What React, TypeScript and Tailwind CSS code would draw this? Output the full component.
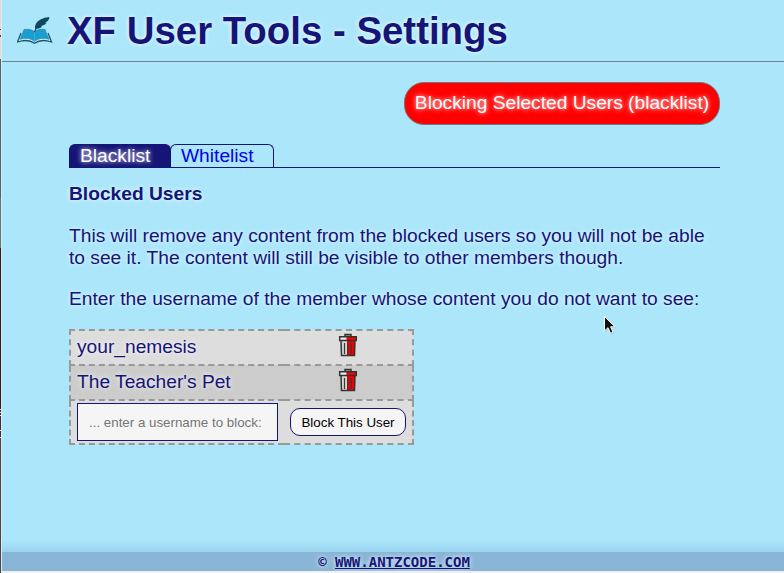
import React from "react";

const glow = "[text-shadow:0_0_5px_#fff]";

function BookLogo() {
  return (
    <svg className="block h-[28px] w-[36px]" viewBox="0 0 36 28">
      <path d="M4 16 L0.500 25 Q11 21.500 17.500 26.300 Q24 21.500 34.500 25 L31 16" fill="#d9f1f8" stroke="#17566e" strokeWidth="1.300" />
      <path d="M7 12.500 L3 22.300 Q12 19.500 17.500 24.500 Q23 19.500 32 22.300 L28 12.500 Q21 11.500 17.500 15 Q14 11.500 7 12.500Z" fill="#199ed3" stroke="#2588ad" strokeWidth=".7" />
      <path d="M17.500 15.500V24.500" stroke="#4ab7dc" strokeWidth=".7" />
      <path d="M17.300 15 Q20 8.500 27 3" fill="none" stroke="#17475c" strokeWidth="1.100" />
      <path d="M18 11.500 Q17.500 5.500 23.500 2.500 Q27.500 .400 32.300 0 Q32.800 2 30.500 4.200 L28 5.500 L29.800 5.800 Q27.500 8.700 24 9 L25 9.800 Q22 12.500 18 11.500Z" fill="#0e4960" />
    </svg>
  );
}

function TrashIcon() {
  return (
    <svg className="mx-auto block h-[24px] w-[20px]" viewBox="0 0 20 24">
      <path d="M3 7H10V22.500H3.500Z" fill="#d5d5d5" />
      <path d="M9 7H17V22.500H9Z" fill="#f00000" />
      <path d="M7 4V1.500H13V4" fill="#999" stroke="#333" strokeWidth="1.500" />
      <path d="M1.700 3.800H8.500V7.500H1.700Z" fill="#eee" />
      <path d="M8.500 3.800H18.300V7.500H8.500Z" fill="#f00" />
      <path d="M1.700 3.800H18.300V7.500H1.700ZM3 7.500L3.500 22.500H16.500L17 7.500" fill="none" stroke="#333" strokeWidth="1.500" />
      <path d="M6.500 10V21M9.800 10V21M13.200 10V21" stroke="#403535" strokeWidth="1.200" />
    </svg>
  );
}

function WindowEdge() {
  return (
    <div className="flex w-[2px] shrink-0 border-r border-[#dfe9ed] bg-[linear-gradient(to_bottom,#ddd_0_29px,#444_29px_30px,#ddd_30px_35px,#444_35px_37px,#ddd_37px_59px,#416b7c_59px_198px,#537b84_198px_248px,#211f27_248px_409px,#ddd_409px_410px,#334_410px_412px,#ddd_412px_413px,#334_413px_415px,#ddd_415px_416px,#334_416px_430px,#ddd_430px_431px,#334_431px_437px,#ddd_437px_438px,#414753_438px)]" />
  );
}

export default function App() {
  return (
    <div className="relative flex h-[573px] w-[784px] overflow-hidden bg-[#abe6fb] font-['Liberation_Sans',Arial,sans-serif] text-[19.2px] leading-[22px] text-[#151578]">
      <WindowEdge />
      <div className="flex min-w-0 flex-1 flex-col">
        <header className="flex h-[62px] shrink-0 items-center border-b border-[#778087] pl-[15px]">
          <BookLogo />
          <h1 className={`ml-[14px] text-[38.4px] leading-[44px] font-bold ${glow}`}>XF User Tools - Settings</h1>
        </header>
        <main className={`mr-[64px] ml-[67px] flex flex-1 flex-col items-start pt-[20px] ${glow}`}>
          <div className="flex h-[43px] w-[316px] items-center justify-center self-end rounded-[20px] border border-[#777] bg-[#f00] pb-[2px] text-white">
            Blocking Selected Users (blacklist)
          </div>
          <nav className="mt-[19px] flex h-[24px] w-full border-b border-[#151578] [text-shadow:none]">
            <span className="w-[102px] rounded-t-[6px] border border-b-0 border-[#151578] bg-[#151578] pl-[10px] text-white [text-shadow:0_0_5px_#fff]">Blacklist</span>
            <span className="-ml-px w-[104px] rounded-t-[6px] border border-b-0 border-[#151578] pl-[10px] text-[#0000ee]">Whitelist</span>
          </nav>
          <h2 className="mt-[15px] font-bold">Blocked Users</h2>
          <p className="mt-[20px] w-[651px]">This will remove any content from the blocked users so you will not be able to see it. The content will still be visible to other members though.</p>
          <p className="mt-[19px]">Enter the username of the member whose content you do not want to see:</p>
          <table className="mt-[19px] w-[345px] table-fixed border-collapse">
            <colgroup>
              <col className="w-[214px]" />
              <col />
            </colgroup>
            <tbody>
              <tr className="h-[35px] border-2 border-dashed border-[#999] bg-[#ddd]">
                <td className="p-0 pb-[2px] pl-[6px]">your_nemesis</td>
                <td className="p-0 pr-px pb-[5px]"><TrashIcon /></td>
              </tr>
              <tr className="h-[35px] border-2 border-dashed border-[#999] bg-[#ccc]">
                <td className="p-0 pb-[2px] pl-[6px]">The Teacher's Pet</td>
                <td className="p-0 pr-px pb-[5px]"><TrashIcon /></td>
              </tr>
              <tr className="h-[44px] border-2 border-dashed border-[#999] bg-[#ddd]">
                <td className="p-0 pl-[6px]">
                  <input className="block h-[38px] w-[201px] border border-[#151578] bg-[#f5f5f5] px-[11px] text-[13.333px] text-black [text-shadow:none] placeholder:text-[#757575]" placeholder="... enter a username to block:" />
                </td>
                <td className="p-0 pl-[6px]">
                  <button className="block h-[28px] w-[116px] rounded-[10px] border border-[#151578] bg-[#f5f5f5] text-[13.333px] leading-[15px] text-black [text-shadow:none]">Block This User</button>
                </td>
              </tr>
            </tbody>
          </table>
        </main>
        <div className="h-[12px] shrink-0 bg-linear-to-b from-[#abe6fb] to-[#9bd3ef]" />
        <footer className={`flex h-[19px] shrink-0 items-center justify-center bg-[#89b6d6] pt-px pl-[2px] font-['DejaVu_Sans_Mono',monospace] text-[14px] leading-[16px] font-bold whitespace-pre ${glow}`}>
          <span>© </span><a className="underline">WWW.ANTZCODE.COM</a>
        </footer>
        <div className="h-[2px] shrink-0 bg-[#f0f0f0]" />
      </div>
      <svg className="absolute top-[315px] left-[603px] h-[22px] w-[16px]" viewBox="0 0 16 22">
        <path d="M2 2V17L5.500 13.700L8 19.500L11 18.200L8.500 12.700H13Z" fill="#7799a8" opacity=".45" />
        <path d="M1.500 1.500V16L5 12.700L7.500 18.300L10 17.200L7.600 11.800H12Z" fill="#111" stroke="#fff" strokeWidth="1" />
      </svg>
    </div>
  );
}
